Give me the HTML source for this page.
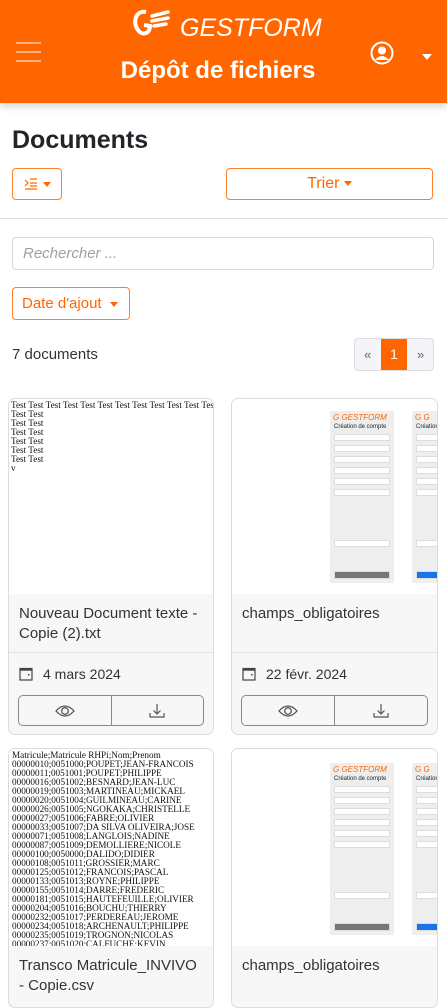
<!DOCTYPE html>
<html><head><meta charset="utf-8"><style>
*{box-sizing:border-box;margin:0;padding:0}
body{width:447px;height:991px;overflow:hidden;font-family:"Liberation Sans",sans-serif;background:#fff;color:#212529;position:relative}
.hdr{position:absolute;left:0;top:0;width:447px;height:103px;background:#ff6600;box-shadow:0 3px 8px rgba(0,0,0,.18)}
.abs{position:absolute}
.ob{border:1px solid #ff7f2a;border-radius:4px;color:#ff6600;position:absolute}
.caret{display:inline-block;border-left:4px solid transparent;border-right:4px solid transparent;border-top:5px solid currentColor;vertical-align:middle}
.card{position:absolute;width:206px;border:1px solid #dcdcdc;border-radius:7px;overflow:hidden;background:#f7f7f8}
.thumb{background:#fff;height:195px;position:relative;overflow:hidden}
.title{height:59px;padding:10px 10px 6px;font-size:15px;line-height:20px;color:#333;border-bottom:1px solid #e2e2e2}
.foot{padding:10px 9px 0;height:83px}
.date{font-size:14px;color:#333;height:22px;display:flex;align-items:center;gap:10px;padding-left:1px}
.btns{margin-top:10px;display:flex;border:1px solid #8a8a8a;border-radius:5px;height:31px}
.btns div{flex:1;display:flex;align-items:center;justify-content:center}
.btns div+div{border-left:1px solid #8a8a8a}
.txt{font-family:"Liberation Serif",serif;font-size:9.2px;line-height:9px;padding:2px 2px;color:#111;white-space:nowrap}
.csv{font-family:"Liberation Serif",serif;font-size:9.2px;line-height:9px;padding:2px 3px;color:#111;white-space:nowrap}
.form{position:absolute;background:#eee;width:64px;top:12px;height:172px}
.form b{display:block;background:#fff;height:7px;margin:4px 4px 0;border:1px solid #ddd}
</style></head><body>
<div class="hdr">
 <div class="abs" style="left:16px;top:42px;width:25px">
  <div style="height:2px;background:#ffb27f;margin-bottom:7px"></div><div style="height:2px;background:#ffb27f;margin-bottom:7px"></div><div style="height:2px;background:#ffb27f"></div></div>
 <svg class="abs" style="left:132px;top:8px" width="40" height="30" viewBox="0 0 40 30"><path d="M14 4 C4 2 0 14 6 22 C10 28 18 26 18 18 L12 17" fill="none" stroke="#fff" stroke-width="4"/><path d="M20 8 L36 4 M20 13 L36 10 M22 18 L34 16" stroke="#fff" stroke-width="3.5" stroke-linecap="round"/></svg>
 <div class="abs" style="left:180px;top:14px;font-size:25px;color:#fff;font-style:italic;letter-spacing:0">GESTFORM</div>
 <div class="abs" style="left:0;width:436px;text-align:center;top:57px;font-size:24px;color:#fff;font-weight:bold">Dépôt de fichiers</div>
 <svg class="abs" style="left:370px;top:41px" width="24" height="24" viewBox="0 0 24 24"><circle cx="12" cy="12" r="10.5" fill="none" stroke="#fff" stroke-width="2"/><circle cx="12" cy="9.5" r="4" fill="#fff"/><path d="M5 19 Q12 11 19 19" fill="#fff"/></svg>
 <div class="abs" style="left:422px;top:48px;color:#fff"><span class="caret" style="border-left-width:5px;border-right-width:5px;border-top-width:6px"></span></div>
</div>
<div class="abs" style="left:12px;top:126px;font-size:25px;font-weight:bold;color:#212529">Documents</div>
<div class="ob" style="left:12px;top:168px;width:50px;height:32px;display:flex;align-items:center;justify-content:center;gap:5px">
 <svg width="14" height="12" viewBox="0 0 14 12"><path d="M1 2 L4 5 L1 8 M6 1 H13 M6 5 H13 M6 8 H13 M1 11 H13" stroke="#ff6600" stroke-width="1.2" fill="none"/></svg><span class="caret"></span></div>
<div class="ob" style="left:226px;top:168px;width:207px;height:32px;text-align:center;line-height:30px;font-size:16px">Trier <span class="caret"></span></div>
<div class="abs" style="left:0;top:218px;width:447px;height:1px;background:#dedede"></div>
<div class="abs" style="left:12px;top:237px;width:422px;height:33px;border:1px solid #d6d6d6;border-radius:4px;font-size:15px;font-style:italic;color:#a0a0a0;padding:7px 10px">Rechercher ...</div>
<div class="ob" style="left:12px;top:287px;width:118px;height:33px;line-height:31px;padding-left:9px;font-size:15px">Date d'ajout &nbsp;<span class="caret"></span></div>
<div class="abs" style="left:12px;top:346px;font-size:15px;color:#333">7 documents</div>
<div class="abs" style="left:354px;top:338px;width:80px;height:33px;border:1px solid #dcdcdc;border-radius:4px;background:#f3f5f8;font-size:13px;color:#666">
 <span class="abs" style="left:9px;top:8px">«</span>
 <div class="abs" style="left:26px;top:0;width:26px;height:31px;background:#ff6600;color:#fff;text-align:center;line-height:31px;font-size:14px">1</div>
 <span class="abs" style="left:62px;top:8px">»</span>
</div>

<div class="card" style="left:8px;top:398px;height:337px">
 <div class="thumb"><div class="txt">Test Test Test Test Test Test Test Test Test Test Test Test<br>Test Test<br>Test Test<br>Test Test<br>Test Test<br>Test Test<br>Test Test<br>v</div></div>
 <div class="title">Nouveau Document texte - Copie (2).txt</div>
 <div class="foot"><div class="date"><svg width="14" height="14" viewBox="0 0 14 14"><rect x="1" y="1.5" width="12" height="11.5" fill="none" stroke="#444" stroke-width="1.2"/><rect x="1" y="1.5" width="12" height="2.2" fill="#444"/><rect x="9" y="7" width="1.5" height="1.5" fill="#444"/></svg>4 mars 2024</div>
 <div class="btns"><div><svg width="20" height="14" viewBox="0 0 20 14"><path d="M1 7 Q10 -3 19 7 Q10 17 1 7Z" fill="none" stroke="#555" stroke-width="1.3"/><circle cx="10" cy="7" r="3.3" fill="none" stroke="#555" stroke-width="1.3"/></svg></div><div><svg width="16" height="16" viewBox="0 0 16 16"><path d="M8 1 V11 M4.5 7.5 L8 11 L11.5 7.5 M1 10 V14 H15 V10" fill="none" stroke="#555" stroke-width="1.2"/></svg></div></div></div>
</div>

<div class="card" style="left:231px;top:398px;height:337px;width:207px">
 <div class="thumb"><div class="form" style="left:98px"><div style="color:#f60;font-size:8px;font-style:italic;padding:2px 3px">G GESTFORM</div><div style="font-size:6px;padding:0 4px">Création de compte</div><b></b><b></b><b></b><b></b><b></b><b></b><div style="height:40px"></div><b></b><div style="height:20px"></div><b style="background:#777;height:8px"></b></div>
 <div class="form" style="left:180px"><div style="color:#f60;font-size:8px;padding:2px 3px">G G</div><div style="font-size:6px;padding:0 4px">Création</div><b></b><b></b><b></b><b></b><b></b><b></b><div style="height:40px"></div><b></b><div style="height:20px"></div><b style="background:#1a73e8;height:8px"></b></div></div>
 <div class="title">champs_obligatoires</div>
 <div class="foot"><div class="date"><svg width="14" height="14" viewBox="0 0 14 14"><rect x="1" y="1.5" width="12" height="11.5" fill="none" stroke="#444" stroke-width="1.2"/><rect x="1" y="1.5" width="12" height="2.2" fill="#444"/><rect x="9" y="7" width="1.5" height="1.5" fill="#444"/></svg>22 févr. 2024</div>
 <div class="btns"><div><svg width="20" height="14" viewBox="0 0 20 14"><path d="M1 7 Q10 -3 19 7 Q10 17 1 7Z" fill="none" stroke="#555" stroke-width="1.3"/><circle cx="10" cy="7" r="3.3" fill="none" stroke="#555" stroke-width="1.3"/></svg></div><div><svg width="16" height="16" viewBox="0 0 16 16"><path d="M8 1 V11 M4.5 7.5 L8 11 L11.5 7.5 M1 10 V14 H15 V10" fill="none" stroke="#555" stroke-width="1.2"/></svg></div></div></div>
</div>

<div class="card" style="left:8px;top:748px;height:260px">
 <div class="thumb" style="height:197px"><div class="csv">Matricule;Matricule RHPi;Nom;Prenom<br>00000010;0051000;POUPET;JEAN-FRANCOIS<br>00000011;0051001;POUPET;PHILIPPE<br>00000016;0051002;BESNARD;JEAN-LUC<br>00000019;0051003;MARTINEAU;MICKAEL<br>00000020;0051004;GUILMINEAU;CARINE<br>00000026;0051005;NGOKAKA;CHRISTELLE<br>00000027;0051006;FABRE;OLIVIER<br>00000033;0051007;DA SILVA OLIVEIRA;JOSE<br>00000071;0051008;LANGLOIS;NADINE<br>00000087;0051009;DEMOLLIERE;NICOLE<br>00000100;0050000;DALIDO;DIDIER<br>00000108;0051011;GROSSIER;MARC<br>00000125;0051012;FRANCOIS;PASCAL<br>00000133;0051013;ROYNE;PHILIPPE<br>00000155;0051014;DARRE;FREDERIC<br>00000181;0051015;HAUTEFEUILLE;OLIVIER<br>00000204;0051016;BOUCHU;THIERRY<br>00000232;0051017;PERDEREAU;JEROME<br>00000234;0051018;ARCHENAULT;PHILIPPE<br>00000235;0051019;TROGNON;NICOLAS<br>00000237;0051020;CALFUCHE;KEVIN</div></div>
 <div class="title" style="border:0">Transco Matricule_INVIVO - Copie.csv</div>
</div>

<div class="card" style="left:231px;top:748px;height:260px;width:207px">
 <div class="thumb" style="height:197px"><div class="form" style="left:98px;top:14px"><div style="color:#f60;font-size:8px;font-style:italic;padding:2px 3px">G GESTFORM</div><div style="font-size:6px;padding:0 4px">Création de compte</div><b></b><b></b><b></b><b></b><b></b><b></b><div style="height:40px"></div><b></b><div style="height:20px"></div><b style="background:#777;height:8px"></b></div>
 <div class="form" style="left:180px;top:14px"><div style="color:#f60;font-size:8px;padding:2px 3px">G G</div><div style="font-size:6px;padding:0 4px">Création</div><b></b><b></b><b></b><b></b><b></b><b></b><div style="height:40px"></div><b></b><div style="height:20px"></div><b style="background:#1a73e8;height:8px"></b></div></div>
 <div class="title" style="border:0">champs_obligatoires</div>
</div>
</body></html>
